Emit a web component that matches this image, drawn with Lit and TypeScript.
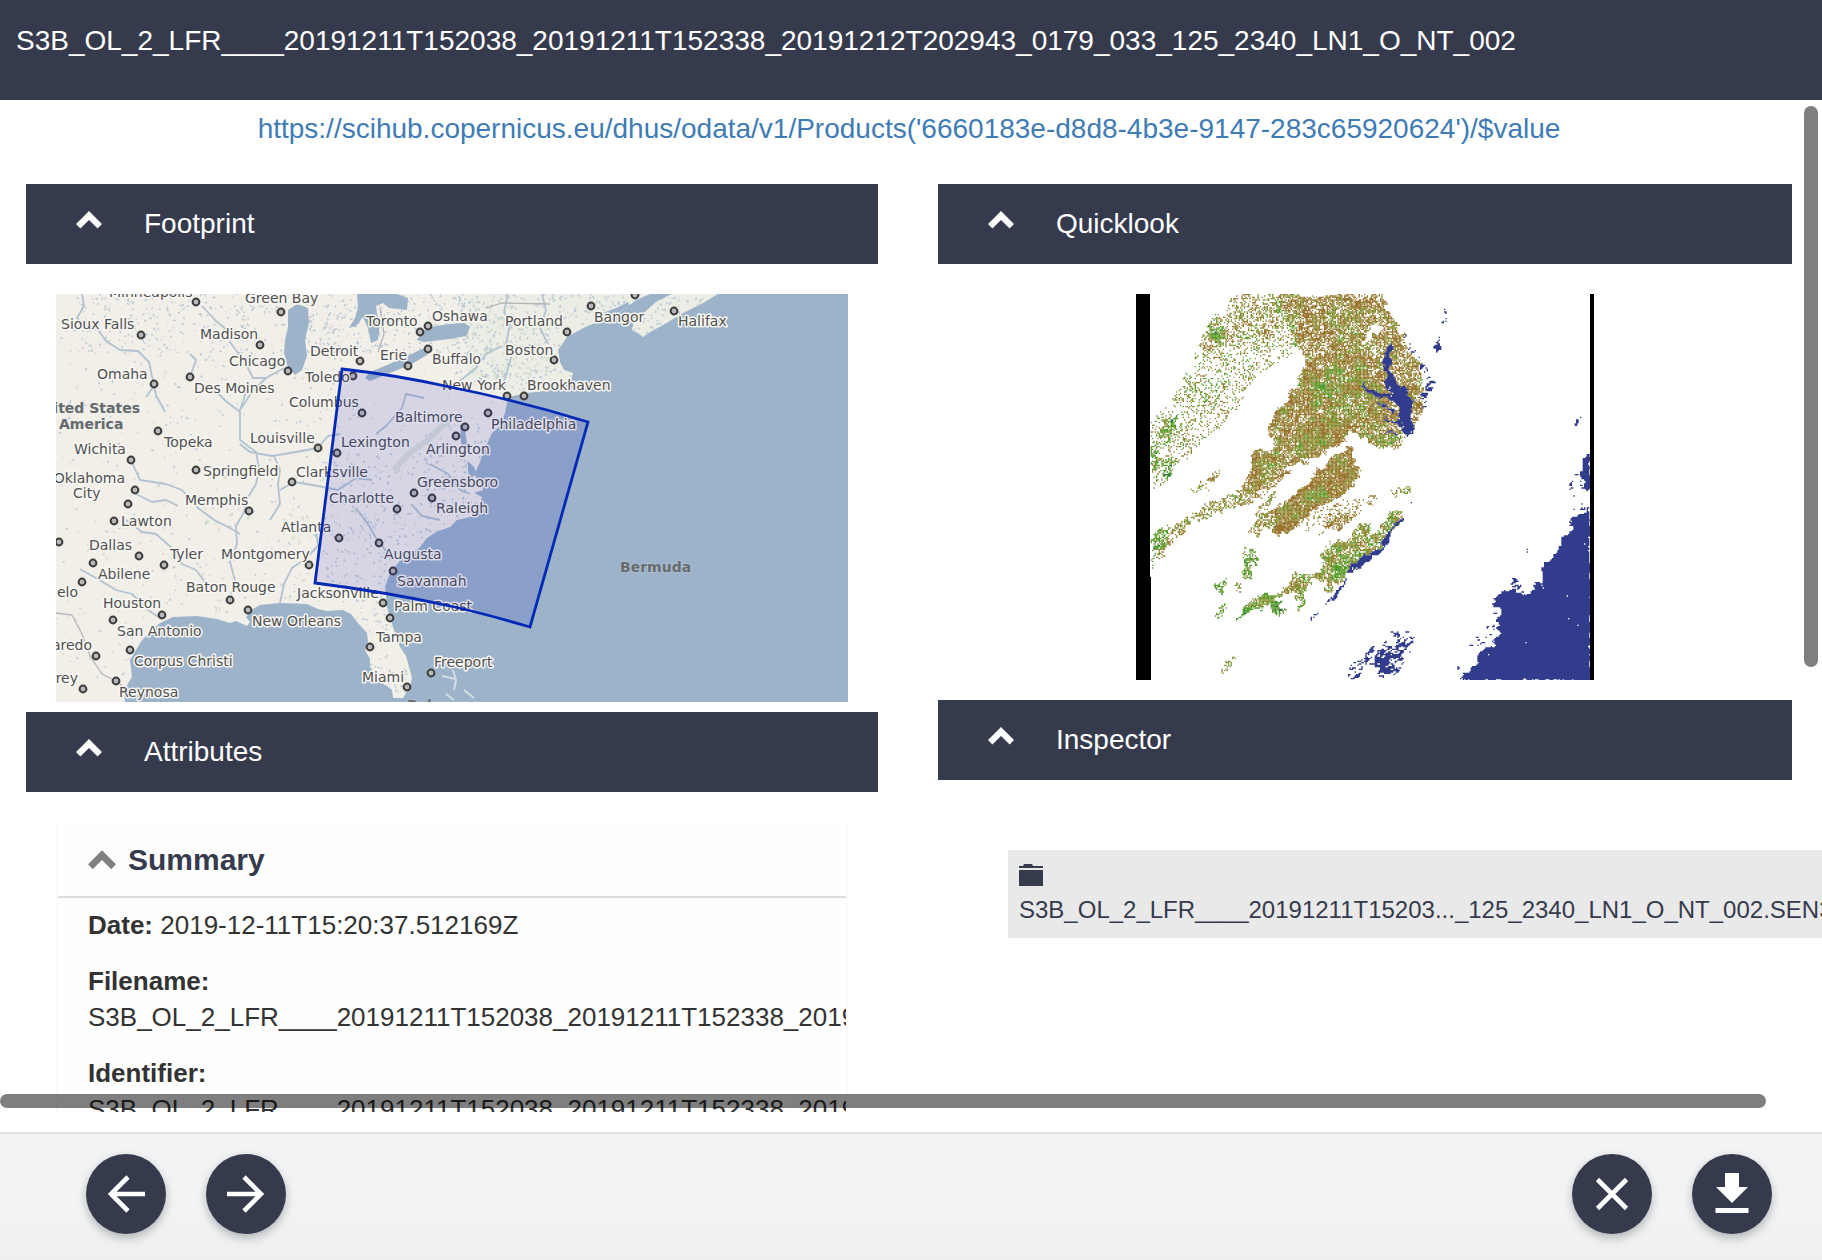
import { LitElement, html, svg, css, nothing } from "lit";
import { customElement, property, state } from "lit/decorators.js";

type Pt = [number, number];

/** Small deterministic generator, so that textures are the same on every load. */
function seeded(seed: number): () => number {
  let s = seed >>> 0;
  return () => {
    s = (s + 0x6d2b79f5) >>> 0;
    let t = s;
    t = Math.imul(t ^ (t >>> 15), t | 1);
    t ^= t + Math.imul(t ^ (t >>> 7), t | 61);
    return ((t ^ (t >>> 14)) >>> 0) / 4294967296;
  };
}

function parse(points: string): Pt[] {
  return points.split(" ").map((p) => p.split(",").map(Number) as Pt);
}

function inside(poly: Pt[], x: number, y: number): boolean {
  let hit = false;
  for (let i = 0, j = poly.length - 1; i < poly.length; j = i++) {
    const [xi, yi] = poly[i];
    const [xj, yj] = poly[j];
    if (yi > y !== yj > y && x < ((xj - xi) * (y - yi)) / (yj - yi) + xi) hit = !hit;
  }
  return hit;
}

/** Smooth value noise in 0..1 on a lattice of the given size. */
function makeNoise(seed: number, size: number): (x: number, y: number) => number {
  const rnd = seeded(seed);
  const table = Array.from({ length: 4096 }, () => rnd());
  const at = (i: number, j: number) => table[((i & 63) << 6) | (j & 63)];
  return (x, y) => {
    const gx = x / size;
    const gy = y / size;
    const i = Math.floor(gx);
    const j = Math.floor(gy);
    const fx = gx - i;
    const fy = gy - j;
    const a = at(i, j) * (1 - fx) + at(i + 1, j) * fx;
    const b = at(i, j + 1) * (1 - fx) + at(i + 1, j + 1) * fx;
    return a * (1 - fy) + b * fy;
  };
}

/* ---------- Footprint map ---------- */

const LAND =
  "M0 0V408H69L68 396 76 383 74 366 86 346 104 329 117 323 141 322 161 325 174 329 180 327 191 332 194 328 190 323 197 315 204 311 224 309 251 310 262 315 271 317 287 316 295 320 301 328 311 339 312 348 309 356 314 365 314 373 324 388 331 392 336 396 337 404 347 404 354 393 356 384 353 373 350 362 344 353 337 333 331 313 329 293 334 279 347 263 356 259 364 253 371 244 380 238 394 233 401 226 410 224 427 219 424 210 426 203 418 199 427 196 424 186 419 179 424 168 427 159 436 139 444 132 449 119 452 103 471 99 488 97 504 93 514 89 517 79 508 76 504 68 502 56 511 43 527 34 541 28 554 24 567 16 575 10 580 6 594 0Z";

const LAKES = [
  "M232 16L241 10 252 14 253 29 249 46 251 62 246 76 239 81 232 73 228 59 229 46 232 33Z",
  "M301 0L302 13 299 24 293 34 300 32 307 23 312 34 315 49 322 46 324 30 321 20 320 12 327 9 333 14 351 16 352 4 341 0Z",
  "M309 84L314 78 331 71 347 64 364 56 377 51 371 61 354 71 334 79 314 87Z",
  "M361 46L368 36 380 32 394 30 408 29 414 33 410 42 394 45 368 48Z",
];

const BAYS = [
  "M412 167L418 173 423 186 418 181 414 187 412 177Z",
  "M544 20L560 14 572 8 574 12 560 20 548 25Z",
  "M404 130L409 136 411 150 408 160 405 148Z",
];

const NOVA_SCOTIA = "M576 36L578 27 590 17 600 8 616 0H662L647 9 627 19 607 31 594 38 587 43 582 39Z";

const RIVERS = [
  "M26 0L28 12 21 24 27 30 42 36 50 47 64 56 82 57 93 68 96 82 100 101 109 118",
  "M90 103L98 92 102 90",
  "M146 12L160 27 176 40 174 48 190 70 197 84 210 84 228 74",
  "M158 96L171 108 184 118 184 146 200 158 203 174 200 190 191 205 188 218 180 232 181 250 174 268 180 290 175 300",
  "M184 150L194 158 216 162 240 158 262 154 272 142 284 140",
  "M75 166L84 186 110 190 126 196 142 214 158 226 174 234 184 240",
  "M70 226L86 238 100 240 118 256 126 270 140 276 152 292",
  "M24 275L40 284 60 296 76 300 92 316 104 324",
  "M80 200L96 208 110 206 122 212",
  "M218 162L224 176 222 190 224 210 214 226",
  "M224 309L228 290 236 274 248 266 262 252 260 236",
  "M224 196L238 188 262 192 282 196 300 184 316 186",
  "M134 83L140 66 134 60",
  "M210 84L196 98 184 116 190 98",
  "M320 140L330 132 346 114 350 100 368 104",
  "M300 214L312 230 320 244 334 262",
  "M355 210L366 222 384 226",
  "M374 170L392 180 404 196 414 200",
  "M386 190L396 186 408 190",
  "M452 0L448 18 454 30 450 50 456 60 448 88",
  "M486 0L490 16 484 34 492 50",
  "M400 90L420 74 430 60 446 52",
];

const BORDERS = ["M0 319L16 321 26 340 34 362 46 380 60 387 74 398", "M430 14L446 9 494 10", "M324 14L328 40 322 58"];

const CITIES: Pt[] = [
  [140, 8], [85, 41], [225, 18], [204, 51], [232, 77], [98, 90], [134, 83], [102, 137], [75, 166], [140, 176],
  [79, 196], [236, 188], [262, 154], [281, 159], [306, 119], [297, 82], [304, 67], [352, 72], [364, 38], [372, 32],
  [372, 55], [358, 199], [376, 204], [511, 38], [535, 12], [579, 1], [618, 17], [498, 66], [451, 102], [468, 102],
  [432, 119], [409, 133], [400, 142], [72, 210], [58, 227], [3, 248], [193, 217], [341, 215], [283, 244], [323, 249],
  [337, 277], [83, 262], [108, 271], [37, 269], [26, 288], [253, 271], [174, 306], [192, 316], [106, 321], [57, 326],
  [327, 309], [334, 324], [314, 353], [74, 356], [40, 362], [60, 387], [27, 395], [375, 379], [351, 393],
];

interface MapLabel {
  x: number;
  y: number;
  text: string;
  end?: boolean;
  country?: boolean;
}

const LABELS: MapLabel[] = [
  { x: 53, y: 3, text: "Minneapolis" }, { x: 189, y: 9, text: "Green Bay" }, { x: 5, y: 35, text: "Sioux Falls" },
  { x: 144, y: 45, text: "Madison" }, { x: 173, y: 72, text: "Chicago" }, { x: 310, y: 32, text: "Toronto" },
  { x: 376, y: 27, text: "Oshawa" }, { x: 254, y: 62, text: "Detroit" }, { x: 324, y: 66, text: "Erie" },
  { x: 376, y: 70, text: "Buffalo" }, { x: 41, y: 85, text: "Omaha" }, { x: 249, y: 88, text: "Toledo" },
  { x: 138, y: 99, text: "Des Moines" }, { x: 233, y: 113, text: "Columbus" },
  { x: 84, y: 119, text: "United States", end: true, country: true }, { x: 3, y: 135, text: "America", country: true },
  { x: 108, y: 153, text: "Topeka" }, { x: 18, y: 160, text: "Wichita" }, { x: 194, y: 149, text: "Louisville" },
  { x: 339, y: 128, text: "Baltimore" }, { x: 285, y: 153, text: "Lexington" }, { x: 370, y: 160, text: "Arlington" },
  { x: 147, y: 182, text: "Springfield" }, { x: 240, y: 183, text: "Clarksville" },
  { x: 69, y: 189, text: "Oklahoma", end: true }, { x: 17, y: 204, text: "City" }, { x: 361, y: 193, text: "Greensboro" },
  { x: 386, y: 96, text: "New York" }, { x: 449, y: 32, text: "Portland" }, { x: 538, y: 28, text: "Bangor" },
  { x: 622, y: 32, text: "Halifax" }, { x: 449, y: 61, text: "Boston" }, { x: 471, y: 96, text: "Brookhaven" },
  { x: 435, y: 135, text: "Philadelphia" }, { x: 129, y: 211, text: "Memphis" }, { x: 273, y: 209, text: "Charlotte" },
  { x: 65, y: 232, text: "Lawton" }, { x: 380, y: 219, text: "Raleigh" }, { x: 225, y: 238, text: "Atlanta" },
  { x: 33, y: 256, text: "Dallas" }, { x: 114, y: 265, text: "Tyler" }, { x: 165, y: 265, text: "Montgomery" },
  { x: 328, y: 265, text: "Augusta" }, { x: 42, y: 285, text: "Abilene" }, { x: 341, y: 292, text: "Savannah" },
  { x: 22, y: 303, text: "San Angelo", end: true }, { x: 130, y: 298, text: "Baton Rouge" },
  { x: 241, y: 304, text: "Jacksonville" }, { x: 47, y: 314, text: "Houston" }, { x: 338, y: 317, text: "Palm Coast" },
  { x: 196, y: 332, text: "New Orleans" }, { x: 61, y: 342, text: "San Antonio" }, { x: 320, y: 348, text: "Tampa" },
  { x: 36, y: 356, text: "Laredo", end: true }, { x: 78, y: 372, text: "Corpus Christi" },
  { x: 378, y: 373, text: "Freeport" }, { x: 306, y: 388, text: "Miami" }, { x: 22, y: 389, text: "Monterrey", end: true },
  { x: 63, y: 403, text: "Reynosa" }, { x: 351, y: 416, text: "Bahamas", country: true },
  { x: 564, y: 278, text: "Bermuda", country: true },
];

/** Short strokes that stand for ponds, creeks and woods. */
function speckles(seed: number, count: number, box: [number, number, number, number]): string {
  const rnd = seeded(seed);
  const [x0, y0, w, h] = box;
  let d = "";
  for (let i = 0; i < count; i++) {
    const x = (x0 + rnd() * w).toFixed(1);
    const y = (y0 + rnd() * h).toFixed(1);
    d += `M${x} ${y}l${(rnd() * 5 - 2.5).toFixed(1)} ${(rnd() * 4 - 1.5).toFixed(1)}`;
  }
  return d;
}

const WATER_SPECKS =
  speckles(3, 330, [0, 0, 300, 400]) +
  speckles(5, 240, [20, 0, 210, 60]) +
  speckles(7, 800, [400, 0, 250, 95]) +
  speckles(9, 300, [250, 0, 170, 60]) +
  speckles(11, 300, [270, 160, 140, 130]) +
  speckles(13, 90, [300, 300, 55, 100]) +
  speckles(15, 120, [370, 130, 70, 80]);
const TOWN_SPECKS = speckles(17, 300, [0, 0, 460, 400]);
const WOOD_SPECKS = speckles(19, 50, [150, 180, 160, 150]) + speckles(21, 90, [410, 20, 90, 70]);

@customElement("footprint-map")
export class FootprintMap extends LitElement {
  static styles = css`
    :host {
      display: block;
    }
    .map {
      display: block;
      width: 100%;
    }
    .label {
      font: 14px "DejaVu Sans", sans-serif;
      fill: #505050;
      stroke: #f8f7f4;
      stroke-width: 3px;
      stroke-linejoin: round;
      paint-order: stroke;
    }
    .country {
      font-weight: bold;
      fill: #646a6e;
      stroke-width: 1px;
      stroke: rgba(230, 232, 230, 0.4);
    }
  `;

  render() {
    return html`<svg class="map" viewBox="0 0 792 408" role="img" aria-label="Product footprint">
      <defs>
        <clipPath id="land"><path d=${LAND} /><path d=${NOVA_SCOTIA} /></clipPath>
      </defs>
      <rect width="792" height="408" fill="#9db3ca" />
      <g fill="#f2efe9"><path d=${LAND} /><path d=${NOVA_SCOTIA} /></g>
      <g clip-path="url(#land)" fill="none">
        <rect x="410" width="250" height="100" fill="#e6ebe2" opacity="0.5" />
        <path d=${WOOD_SPECKS} stroke="#d8e0ce" stroke-width="4" />
        <path d=${TOWN_SPECKS} stroke="#e0ddd6" stroke-width="2" />
        <path d=${WATER_SPECKS} stroke="#b9cad6" stroke-width="1.5" />
        <path d="M338 176L352 160 372 146 384 134 394 124" stroke="#d6dfd4" stroke-width="6" opacity="0.8" />
        ${RIVERS.map((d) => svg`<path d=${d} stroke="#b1c2d0" stroke-width="1.8" stroke-linejoin="round" />`)}
        ${BORDERS.map((d) => svg`<path d=${d} stroke="#b4b4b8" stroke-width="1.3" />`)}
        ${[...LAKES, ...BAYS].map((d) => svg`<path d=${d} fill="#9db3ca" />`)}
      </g>
      <path
        d="M397 376l3 10-2 10M408 396l10 8M386 382l14 3M390 400l8 6"
        fill="none"
        stroke="#d3dde2"
        stroke-width="2"
      />
      <g fill="#b9b9b9" stroke="#3c3c3c" stroke-width="2">
        ${CITIES.map(([x, y]) => svg`<circle cx=${x} cy=${y} r="3.4" />`)}
      </g>
      ${LABELS.map(
        (l) => svg`<text class=${l.country ? "label country" : "label"} x=${l.x} y=${l.y}
          text-anchor=${l.end ? "end" : "start"}>${l.text}</text>`
      )}
      <path
        d="M286 75Q340 81 394 93 464 107 532 128L474 333Q430 320 394 312 330 298 259 289Z"
        fill="rgba(0,10,190,0.11)"
        stroke="#0329b6"
        stroke-width="2.8"
      />
    </svg>`;
  }
}

/* ---------- Quicklook raster ---------- */

interface Patch {
  area: Pt[];
  density: number;
  green: number;
}

const patch = (points: string, density: number, green: number): Patch => ({ area: parse(points), density, green });

const PATCHES: Patch[] = [
  patch("300,12 500,12 505,170 440,210 380,250 300,380 200,470 62,610 62,400 130,330 180,240 205,150 245,80 300,60", 0.2, 0.55),
  patch("300,12 480,12 490,90 400,150 260,170 205,200 240,90 290,70", 0.42, 0.4),
  patch("235,100 275,105 285,145 250,155 230,135", 0.8, 0.85),
  patch("90,380 130,375 130,420 105,450 80,440", 0.7, 0.85),
  patch("62,460 85,470 75,540 62,540", 0.65, 0.8),
  patch("95,500 125,510 120,560 98,555", 0.6, 0.85),
  patch("160,250 290,280 260,350 120,340", 0.28, 0.7),
  patch("440,12 750,12 770,60 800,110 830,170 870,230 875,300 865,370 840,430 780,460 700,430 640,400 560,330 505,300 515,200 490,150", 0.72, 0.15),
  patch("620,40 740,60 700,120 660,200 600,240 590,130", 0.7, 0.35),
  patch("505,240 620,220 700,250 850,320 840,430 780,465 690,440 650,410 650,450 600,480 500,500 430,480 415,400 470,330", 0.8, 0.2),
  patch("560,260 620,150 700,120 700,250 780,310 760,400 660,400 540,420 530,350", 0.88, 0.3),
  patch("540,280 600,240 590,320 555,360 535,340", 0.85, 0.6),
  patch("380,480 500,470 600,470 560,500 480,530 430,570 350,610 330,590 360,530", 0.85, 0.3),
  patch("500,410 600,370 650,420 640,450 560,480 500,480", 0.92, 0.35),
  patch("720,430 820,440 800,470 740,460 670,425", 0.7, 0.5),
  patch("560,545 610,500 660,470 670,500 688,540 675,580 620,620 560,650 510,700 450,735 425,700 440,650 500,600", 0.97, 0.18),
  patch("545,600 590,585 580,625 535,640", 0.5, 0.5),
  patch("350,575 410,580 330,640 250,672 190,690 130,750 62,835 62,740 150,690 240,640 310,610", 0.45, 0.4),
  patch("62,730 110,700 115,760 80,800 62,820", 0.65, 0.85),
  patch("380,590 470,535 460,560 400,605 330,655 320,645", 0.6, 0.2),
  patch("380,650 435,600 440,620 400,655 370,665", 0.6, 0.3),
  patch("360,720 400,660 440,640 430,690 400,720 380,745", 0.6, 0.45),
  patch("560,735 600,690 620,660 665,680 640,710 600,720", 0.62, 0.15),
  patch("500,660 600,640 700,610 690,680 600,700 520,720", 0.22, 0.2),
  patch("180,610 260,540 270,545 215,605", 0.4, 0.4),
  patch("600,760 660,740 690,700 715,700 710,735 745,725 770,670 820,670 800,700 760,740 740,780 680,810 640,860 590,900 580,870 540,860 530,900 510,960 500,920 460,900 490,855 560,840 575,790", 0.8, 0.55),
  patch("310,992 350,935 400,915 455,905 440,925 470,960 430,980 410,945 350,965", 0.88, 0.85),
  patch("240,880 280,870 285,915 262,895", 0.5, 0.95),
  patch("320,880 340,870 335,900 315,900", 0.5, 0.8),
  patch("265,940 285,935 270,980 258,980", 0.6, 0.75),
  patch("350,770 385,790 355,860 338,860", 0.55, 0.8),
  patch("280,1130 320,1078 305,1115 285,1150", 0.45, 0.6),
  patch("790,590 835,590 835,612 795,612", 0.45, 0.6),
  patch("705,620 730,620 725,640 708,635", 0.4, 0.2),
];

const CLEAR: Pt[][] = [
  "745,88 750,105 725,140 695,170 685,160 705,125",
  "480,560 500,530 560,505 645,465 650,475 600,500 550,545 500,600 440,655 425,650",
  "510,225 505,280 440,360 400,420 390,380 330,400 400,310 450,260",
].map(parse);

const SEA: Pt[][] = [
  "1380,480 1362,500 1352,540 1362,590 1380,600",
  "1380,640 1365,670 1335,672 1312,688 1328,712 1300,745 1282,770 1272,805 1240,822 1236,868 1200,900 1178,912 1150,897 1110,903 1086,935 1112,962 1100,990 1112,1030 1085,1065 1050,1085 1040,1125 1010,1140 994,1170 1380,1170",
  "785,155 792,170 775,190 780,215 778,240 795,275 800,290 830,285 838,320 855,325 840,350 845,400 850,410 835,435 812,425 815,405 805,390 803,355 790,325 750,320 710,305 695,290 700,275 712,295 750,308 785,310 765,280 757,215 757,185 770,178",
  "740,330 800,365 800,375 745,338",
  "755,380 805,392 815,410 790,400",
  "755,415 800,430 805,440 760,420",
  "808,685 820,682 780,715 768,760 740,788 710,815 670,835 648,858 655,830 690,800 725,785 750,770 755,735 775,712",
  "660,855 620,915 585,945 610,905",
  "562,965 535,992 545,975",
  "928,145 925,180 915,185 912,165",
  "942,80 944,100 938,105",
  "950,55 948,72 945,65",
  "1355,382 1335,400 1325,398",
].map(parse);

const SEA_LOOSE: Patch[] = [
  patch("650,1168 655,1125 690,1100 735,1055 785,1065 825,1025 848,1040 845,1080 820,1080 805,1150 770,1168 730,1130 700,1125 675,1168", 0.46, 0),
  patch("730,1100 775,1065 800,1080 785,1130 765,1165 740,1150", 0.6, 0),
  patch("822,130 850,170 885,225 880,240 850,195 825,160", 0.4, 0),
  patch("890,270 918,262 905,300 880,350 865,375 875,310", 0.5, 0),
  patch("885,230 900,260 890,275", 0.4, 0),
  patch("1140,880 1160,845 1170,870 1190,905 1140,905", 0.35, 0),
  patch("1065,930 1090,930 1110,985 1090,1030 1060,1060 1010,1075 1010,1045 1060,1030 1070,970", 0.26, 0),
  patch("980,1120 995,1125 975,1150 965,1165", 0.35, 0),
  patch("1310,580 1350,530 1380,600 1365,660 1330,680", 0.26, 0),
  patch("1185,765 1195,770 1190,795", 0.4, 0),
  patch("785,1022 805,1025 795,1045", 0.6, 0),
  patch("835,520 870,520 850,545", 0.25, 0),
  patch("845,600 853,640 845,645", 0.35, 0),
];

const LAND_COLOURS = ["#9a7530", "#8f852e", "#b0935a", "#7b942e", "#52a02a", "#2c7a35"];
const SEA_COLOUR = "#323c8c";

/** One path per colour, built of square cells on a 4-unit grid. */
function buildQuicklook(): { colour: string; d: string }[] {
  const rnd = seeded(42);
  const clump = makeNoise(8, 17);
  const fine = makeNoise(23, 8);
  const wobble = makeNoise(31, 13);
  const out = new Map<string, string>();
  const step = 4;
  for (let y = 12; y < 1170; y += step) {
    for (let x = 62; x < 1380; x += step) {
      const jx = x + (wobble(x, y) - 0.5) * 26 + (rnd() - 0.5) * 7;
      const jy = y + (wobble(y + 300, x) - 0.5) * 26 + (rnd() - 0.5) * 7;
      let colour = "";
      const sx = x + (jx - x) * 0.7;
      const sy = y + (jy - y) * 0.7;
      if (SEA.some((a) => inside(a, sx, sy))) {
        if (rnd() > 0.9985) continue;
        colour = SEA_COLOUR;
      } else if (SEA_LOOSE.some((p) => inside(p.area, sx, sy) && fine(x + y, y) * 0.8 + rnd() * 0.2 < p.density)) {
        colour = SEA_COLOUR;
      } else if (!CLEAR.some((a) => inside(a, jx, jy))) {
        let density = 0;
        let green = 0;
        for (const p of PATCHES) {
          if (inside(p.area, jx, jy)) {
            density = Math.max(density, p.density);
            green = Math.max(green * 0.7, p.green);
          }
        }
        if (!density) continue;
        const spread = density > 0.9 ? 0.97 : density * (0.45 + clump(x, y) * 0.7 + fine(y, x) * 0.4);
        if (rnd() > spread) continue;
        const tone = green * 0.7 + (clump(y + 90, x) - 0.5) * 0.6 + (rnd() - 0.5) * 0.45;
        const light = rnd() > 0.9;
        colour = light
          ? LAND_COLOURS[2]
          : tone < 0.14
            ? LAND_COLOURS[0]
            : tone < 0.34
              ? LAND_COLOURS[1]
              : tone < 0.52
                ? LAND_COLOURS[3]
                : tone < 0.82
                  ? LAND_COLOURS[4]
                  : LAND_COLOURS[5];
      }
      if (colour) out.set(colour, (out.get(colour) ?? "") + `M${x} ${y}h4v4h-4z`);
    }
  }
  return [...out].map(([c, d]) => ({ colour: c, d }));
}

const QUICKLOOK = buildQuicklook();

@customElement("quicklook-image")
export class QuicklookImage extends LitElement {
  static styles = css`
    :host {
      display: block;
    }
    .image {
      display: block;
      width: 100%;
      max-width: 458px;
      margin: 0 auto;
    }
  `;

  render() {
    return html`<svg class="image" viewBox="18 12 1374 1158" role="img" aria-label="Product quicklook">
      <rect x="18" y="12" width="1374" height="1158" fill="#fff" />
      ${QUICKLOOK.map((p) => svg`<path fill=${p.colour} d=${p.d} />`)}
      <path d="M18 12H60V860H63V1170H18ZM1380 12H1392V1170H1380Z" fill="#000" />
    </svg>`;
  }
}

/* ---------- Collapsible panel ---------- */

const chevron = (cls: string) => html`<svg class=${cls} viewBox="0 0 26 18" aria-hidden="true">
  <path d="M13 0L26 13 21.6 17.6 13 9 4.4 17.6 0 13Z" fill="currentColor" />
</svg>`;

@customElement("detail-panel")
export class DetailPanel extends LitElement {
  @property() heading = "";
  @state() private open = true;

  static styles = css`
    :host {
      display: block;
    }
    .heading {
      margin: 0;
    }
    .toggle {
      display: flex;
      align-items: center;
      gap: 42px;
      width: 100%;
      height: 80px;
      padding: 0 50px;
      border: 0;
      background: #363a4d;
      color: #fff;
      font: 28px/40px "Liberation Sans", Arial, sans-serif;
      text-align: left;
      cursor: pointer;
    }
    .chevron {
      width: 26px;
      height: 18px;
      margin-bottom: 8px;
    }
    .closed {
      transform: rotate(180deg);
    }
  `;

  render() {
    return html`<h2 class="heading">
        <button class="toggle" aria-expanded=${this.open} @click=${() => (this.open = !this.open)}>
          ${chevron(this.open ? "chevron" : "chevron closed")}<span>${this.heading}</span>
        </button>
      </h2>
      ${this.open ? html`<slot></slot>` : nothing}`;
  }
}

/* ---------- Page ---------- */

const PRODUCT = "S3B_OL_2_LFR____20191211T152038_20191211T152338_20191212T202943_0179_033_125_2340_LN1_O_NT_002";
const PRODUCT_URL = "https://scihub.copernicus.eu/dhus/odata/v1/Products('6660183e-d8d8-4b3e-9147-283c65920624')/$value";

const SUMMARY = [
  { name: "Date", value: "2019-12-11T15:20:37.512169Z", block: false },
  { name: "Filename", value: `${PRODUCT}.SEN3`, block: true },
  { name: "Identifier", value: PRODUCT, block: true },
];

@customElement("app-root")
export class AppRoot extends LitElement {
  static styles = css`
    :host {
      display: flex;
      flex-direction: column;
      height: 100vh;
      background: #fff;
      color: #333;
      font-family: "Liberation Sans", Arial, sans-serif;
      font-size: 28px;
      line-height: 40px;
    }
    .header {
      flex: none;
      padding: 21px 16px 39px;
      background: #363a4d;
    }
    .title {
      margin: 0;
      color: #fff;
      font-size: 28px;
      font-weight: normal;
      white-space: nowrap;
    }
    .body {
      position: relative;
      flex: 1;
      min-height: 0;
      padding-bottom: 20px;
    }
    .scroller {
      height: 100%;
      overflow: hidden;
    }
    .link-row {
      padding: 9px 30px 35px 26px;
      text-align: center;
    }
    .link {
      color: #3f7cb5;
      text-decoration: none;
    }
    .columns {
      display: grid;
      grid-template-columns: minmax(0, 852fr) minmax(0, 854fr);
      gap: 60px;
      align-items: start;
      padding: 0 30px 0 26px;
    }
    .map-box {
      padding: 30px 30px 10px;
    }
    .quicklook-box {
      padding: 30px 30px 20px;
    }
    .card {
      margin: 32px 30px;
      border: solid #fafafa;
      border-width: 0 2px 2px;
      background: #fefefe;
      overflow: hidden;
    }
    .card-title {
      display: flex;
      align-items: center;
      gap: 12px;
      height: 72px;
      margin: 0;
      padding: 0 30px;
      border-bottom: 2px solid #ddd;
      color: #363a4d;
      font-size: 30px;
      line-height: 36px;
    }
    .card-chevron {
      width: 28px;
      height: 20px;
      color: #808080;
    }
    .attributes {
      display: flex;
      flex-direction: column;
      gap: 20px;
      margin: 0;
      padding: 9px 30px;
      font-size: 26px;
      line-height: 36px;
      white-space: nowrap;
    }
    .name,
    .value {
      display: inline;
      margin: 0;
    }
    .name {
      font-weight: bold;
    }
    .block {
      display: block;
    }
    .node {
      display: flex;
      flex-direction: column;
      gap: 7px;
      width: max-content;
      min-width: 100%;
      margin: 70px 0 0 70px;
      padding: 14px 11px 11px;
      border: 0;
      background: #e9e9e9;
      color: #363a4d;
      font: 24px/34px "Liberation Sans", Arial, sans-serif;
      text-align: left;
      white-space: nowrap;
    }
    .folder {
      width: 24px;
      height: 22px;
    }
    .bar {
      position: absolute;
      border-radius: 7px;
      background: rgba(0, 0, 0, 0.5);
    }
    .bar-vertical {
      top: 6px;
      right: 4px;
      width: 14px;
      height: 54.4%;
    }
    .bar-horizontal {
      left: 0;
      right: 56px;
      bottom: 24px;
      height: 14px;
    }
    .footer {
      flex: none;
      display: flex;
      gap: 40px;
      padding: 20px 50px 26px 86px;
      border-top: 2px solid #e0e1e2;
      background: linear-gradient(#f1f3f5 60%, #eeeff1);
    }
    .spacer {
      flex: 1;
    }
    .round {
      width: 80px;
      height: 80px;
      padding: 0;
      border: 0;
      border-radius: 50%;
      background: #363a4d;
      color: #fff;
      box-shadow: 0 4px 10px rgba(0, 0, 0, 0.26);
      cursor: pointer;
    }
    .icon {
      display: block;
      width: 80px;
      height: 80px;
    }
  `;

  private round(label: string, icon: unknown) {
    return html`<button class="round" aria-label=${label}>
      <svg class="icon" viewBox="0 0 80 80" aria-hidden="true">${icon}</svg>
    </button>`;
  }

  render() {
    return html`
      <header class="header"><h1 class="title">${PRODUCT}</h1></header>
      <main class="body">
        <div class="scroller">
          <div class="link-row"><a class="link" href=${PRODUCT_URL}>${PRODUCT_URL}</a></div>
          <div class="columns">
            <div>
              <detail-panel heading="Footprint">
                <div class="map-box"><footprint-map></footprint-map></div>
              </detail-panel>
              <detail-panel heading="Attributes">
                <section class="card">
                  <h3 class="card-title">${chevron("card-chevron")}<span>Summary</span></h3>
                  <dl class="attributes">
                    ${SUMMARY.map(
                      (row) => html`<div>
                        <dt class="name ${row.block ? "block" : ""}">${row.name}:</dt>
                        <dd class="value ${row.block ? "block" : ""}">${row.value}</dd>
                      </div>`
                    )}
                  </dl>
                </section>
              </detail-panel>
            </div>
            <div>
              <detail-panel heading="Quicklook">
                <div class="quicklook-box"><quicklook-image></quicklook-image></div>
              </detail-panel>
              <detail-panel heading="Inspector">
                <button class="node">
                  <svg class="folder" viewBox="0 0 24 22" aria-hidden="true">
                    <path d="M0 2H4L5 0H13L14 2H24V4H0ZM0 6H24V22H0Z" fill="currentColor" />
                  </svg>
                  <span>S3B_OL_2_LFR____20191211T15203..._125_2340_LN1_O_NT_002.SEN3</span>
                </button>
              </detail-panel>
            </div>
          </div>
        </div>
        <div class="bar bar-vertical"></div>
        <div class="bar bar-horizontal"></div>
      </main>
      <footer class="footer">
        ${this.round(
          "Previous product",
          svg`<path d="M59 40H25M42 23L25 40 42 57" fill="none" stroke="currentColor" stroke-width="4.6" />`
        )}
        ${this.round(
          "Next product",
          svg`<path d="M21 40H55M38 23L55 40 38 57" fill="none" stroke="currentColor" stroke-width="4.6" />`
        )}
        <span class="spacer"></span>
        ${this.round(
          "Close",
          svg`<path d="M25.5 25.5L54.5 54.5M54.5 25.5L25.5 54.5" fill="none" stroke="currentColor" stroke-width="4.6" />`
        )}
        ${this.round(
          "Download",
          svg`<path d="M33 19H47V33H56L40 49 24 33H33ZM23.5 54H56.5V59H23.5Z" fill="currentColor" />`
        )}
      </footer>
    `;
  }
}
